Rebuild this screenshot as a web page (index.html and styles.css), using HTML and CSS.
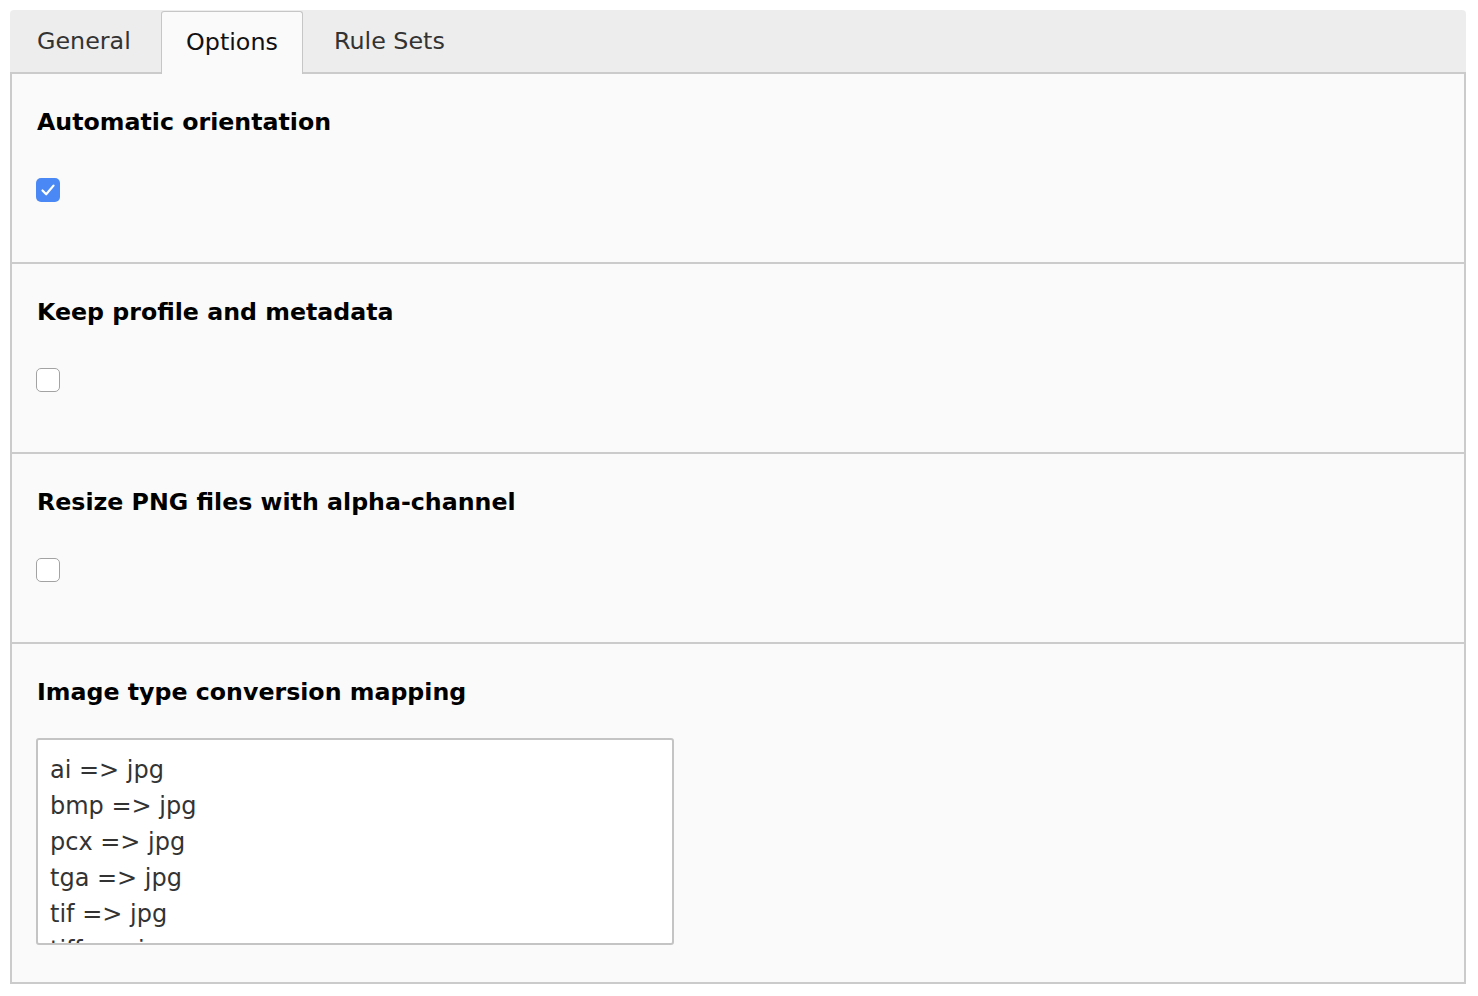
FILE: index.html
```html
<!DOCTYPE html>
<html lang="en">
<head>
<meta charset="utf-8">
<title>Options</title>
<link rel="stylesheet" href="styles.css">
</head>
<body>
<div class="wrap">
  <div class="tabs">
    <div class="tab tab-general">General</div>
    <div class="tab tab-active">Options</div>
    <div class="tab tab-rules">Rule Sets</div>
  </div>
  <div class="panel">
    <div class="section">
      <h3 class="label">Automatic orientation</h3>
      <div class="control check-row">
        <span class="cb cb-on"><svg width="24" height="24" viewBox="0 0 24 24"><path d="M6.5 12.5 L10.2 16.3 L17.5 7.6" fill="none" stroke="#fff" stroke-width="2.2" stroke-linecap="round" stroke-linejoin="round"/></svg></span>
      </div>
    </div>
    <div class="section">
      <h3 class="label">Keep profile and metadata</h3>
      <div class="control check-row">
        <span class="cb"></span>
      </div>
    </div>
    <div class="section">
      <h3 class="label">Resize PNG files with alpha-channel</h3>
      <div class="control check-row">
        <span class="cb"></span>
      </div>
    </div>
    <div class="section section-last">
      <h3 class="label">Image type conversion mapping</h3>
      <div class="control text-row">
        <textarea class="mapping" readonly>ai =&gt; jpg
bmp =&gt; jpg
pcx =&gt; jpg
tga =&gt; jpg
tif =&gt; jpg
tiff =&gt; jpg</textarea>
      </div>
    </div>
  </div>
</div>
</body>
</html>
```

FILE: styles.css
```css
* { box-sizing: border-box; }
html, body { margin: 0; padding: 0; background: #fff; }
body {
  font-family: "DejaVu Sans", Verdana, sans-serif;
  color: #000;
}
.wrap {
  margin: 10px 12px 0 10px;
  width: 1456px;
}
.tabs {
  display: flex;
  height: 62px;
  background: #ededed;
  border-radius: 4px 4px 0 0;
  position: relative;
  z-index: 1;
}
.tab {
  display: flex;
  align-items: center;
  font-size: 23.8px;
  color: #333;
  height: 62px;
  white-space: nowrap;
}
.tab-general { width: 151px; padding: 0 0 0 27px; }
.tab-active {
  width: 142px;
  justify-content: center;
  background: #fafafa;
  color: #111;
  margin-top: 1px;
  height: 63px;
  padding-bottom: 2px;
  border: 1px solid #c6c6c6;
  border-bottom: none;
  border-radius: 3px 3px 0 0;
}
.tab-rules { padding: 0 30px 0 31px; }
.panel {
  background: #fafafa;
  border: 2px solid #cbcbcb;
}
.section {
  padding: 34px 24px 0 24px;
  border-bottom: 2px solid #cbcbcb;
}
.section-last { border-bottom: none; }
.label {
  margin: 0;
  font-size: 23.7px;
  font-weight: bold;
  line-height: 29px;
  height: 29px;
  padding-left: 1px;
}
.check-row {
  padding: 41px 0 60px 0;
  display: flex;
}
.cb {
  display: block;
  width: 24px;
  height: 24px;
  border: 1.5px solid #a3a3a3;
  border-radius: 5px;
  background: #fff;
}
.cb-on {
  background: #4a89f5;
  border: none;
}
.cb svg { display: block; }
.text-row {
  padding: 31px 0 37px 0;
}
.mapping {
  display: block;
  width: 638px;
  height: 207px;
  margin: 0;
  padding: 12px 12px 0 12px;
  border: 2px solid #c4c4c4;
  border-radius: 3px;
  background: #fff;
  font-family: "DejaVu Sans", Verdana, sans-serif;
  font-size: 24px;
  line-height: 36px;
  color: #333;
  resize: none;
  overflow: hidden;
  scrollbar-width: none;
  outline: none;
}
```
